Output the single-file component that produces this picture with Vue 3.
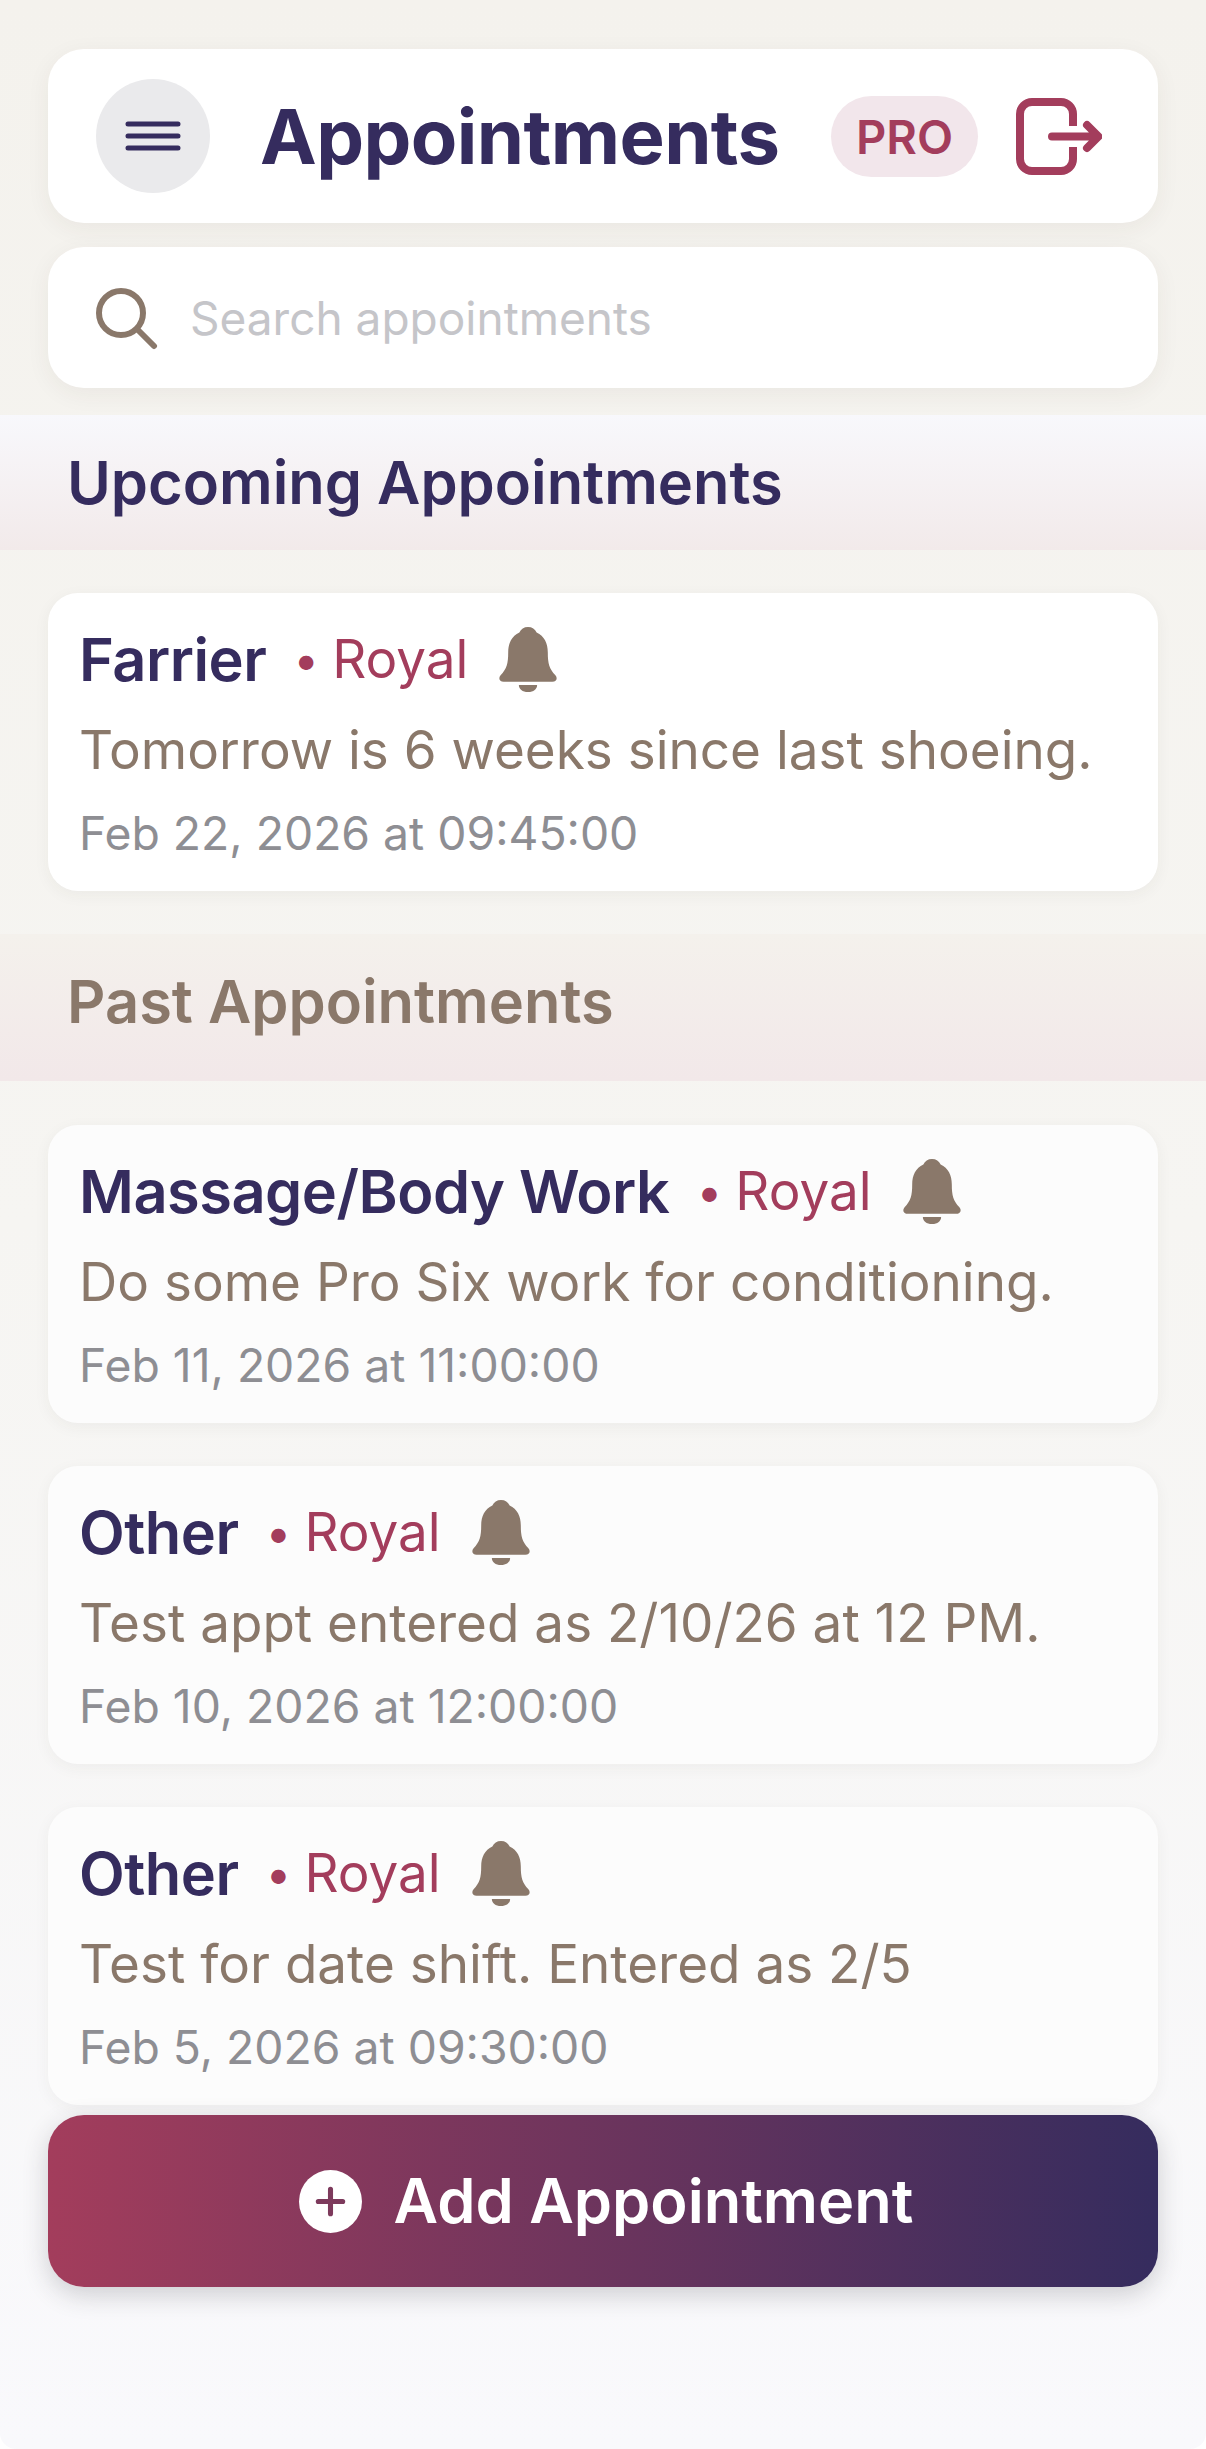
<script setup>
const past = [
  { title: 'Massage/Body Work', note: 'Do some Pro Six work for conditioning.', date: 'Feb 11, 2026 at 11:00:00' },
  { title: 'Other', note: 'Test appt entered as 2/10/26 at 12 PM.', date: 'Feb 10, 2026 at 12:00:00' },
  { title: 'Other', note: 'Test for date shift. Entered as 2/5', date: 'Feb 5, 2026 at 09:30:00' },
]
</script>

<template>
  <div class="page">
    <header class="head card-box">
      <button class="menu">
        <svg width="56" height="34" viewBox="0 0 56 34"><path d="M3 5H53M3 17H53M3 29H53" fill="none" stroke="#352c5e" stroke-width="5" stroke-linecap="round"/></svg>
      </button>
      <h1>Appointments</h1>
      <span class="pro">PRO</span>
      <svg class="logout" width="86" height="77" viewBox="0 0 86 77" fill="none" stroke="#a33d5c" stroke-width="8" stroke-linecap="round" stroke-linejoin="round">
        <path d="M57 28V16A12 12 0 0 0 45 4H16A12 12 0 0 0 4 16V61A12 12 0 0 0 16 73H45A12 12 0 0 0 57 61V49" stroke-linecap="butt"/>
        <path d="M36 38.500H82M71 27L82.500 38.500L71 50"/>
      </svg>
    </header>

    <div class="search card-box">
      <svg width="62" height="62" viewBox="0 0 62 62" fill="none" stroke="#8a786a" stroke-width="6" stroke-linecap="round"><circle cx="25" cy="25" r="22"/><path d="M41 41L58 58"/></svg>
      <span>Search appointments</span>
    </div>

    <h2 class="band upcoming">Upcoming Appointments</h2>
    <section class="list">
      <article class="item">
        <div class="top"><strong>Farrier</strong><i>•</i><em>Royal</em>
          <svg class="bell" width="60" height="65" viewBox="0 0 58 64" fill="#8a786a"><path d="M29 0C33 0 36 2 37.500 5.500C45 9 48.500 16 48.500 25C48.500 36 50 41 56 47.500C58.500 50.500 57 54 53 54H5C1 54 -0.500 50.500 2 47.500C8 41 9.500 36 9.500 25C9.500 16 13 9 20.500 5.500C22 2 25 0 29 0Z"/><path d="M20 57H38C38 61 34.500 64 29 64C23.500 64 20 61 20 57Z"/></svg>
        </div>
        <p>Tomorrow is 6 weeks since last shoeing.</p>
        <time>Feb 22, 2026 at 09:45:00</time>
      </article>
    </section>

    <h2 class="band pastband">Past Appointments</h2>
    <section class="list pastlist">
      <article v-for="p in past" :key="p.note" class="item faded">
        <div class="top"><strong>{{ p.title }}</strong><i>•</i><em>Royal</em>
          <svg class="bell" width="60" height="65" viewBox="0 0 58 64" fill="#8a786a"><path d="M29 0C33 0 36 2 37.500 5.500C45 9 48.500 16 48.500 25C48.500 36 50 41 56 47.500C58.500 50.500 57 54 53 54H5C1 54 -0.500 50.500 2 47.500C8 41 9.500 36 9.500 25C9.500 16 13 9 20.500 5.500C22 2 25 0 29 0Z"/><path d="M20 57H38C38 61 34.500 64 29 64C23.500 64 20 61 20 57Z"/></svg>
        </div>
        <p>{{ p.note }}</p>
        <time>{{ p.date }}</time>
      </article>
    </section>

    <button class="add">
      <svg width="63" height="63" viewBox="0 0 62 62"><circle cx="31" cy="31" r="31" fill="#fff"/><path d="M31 19V43M19 31H43" stroke="#7d3a5c" stroke-width="5" stroke-linecap="round"/></svg>
      <span>Add Appointment</span>
    </button>
  </div>
</template>

<style>
body { background: #fff; }
</style>

<style scoped>
.page {
  width: 1206px;
  height: 2449px;
  overflow: hidden;
  box-sizing: border-box;
  padding-top: 49px;
  border-radius: 0 0 16px 16px;
  background: linear-gradient(180deg, #f4f2ed 0%, #f6f5f2 50%, #f9f9fc 100%);
  font-family: Inter, "Liberation Sans", sans-serif;
  display: flex;
  flex-direction: column;
}
.card-box {
  margin: 0 48px;
  background: #fff;
  border-radius: 36px;
  box-shadow: 0 6px 24px rgba(60, 50, 40, 0.06);
  display: flex;
  align-items: center;
}
.head { height: 174px; padding: 0 56px 0 48px; }
.menu {
  width: 114px; height: 114px; flex: none;
  border: 0; padding: 0; border-radius: 50%;
  background: #eaeaec;
  display: flex; align-items: center; justify-content: center;
}
h1 {
  margin: 0 0 0 50px;
  flex: 1;
  font-size: 76px;
  font-weight: 700;
  letter-spacing: -0.6px;
  color: #352c5e;
}
.pro {
  width: 147px; height: 81px;
  border-radius: 41px;
  background: #f2e6eb;
  color: #a33d5c;
  font-size: 47px;
  font-weight: 600;
  display: flex; align-items: center; justify-content: center;
}
.logout { margin-left: 38px; }
.search {
  height: 141px;
  margin-top: 24px;
  padding-left: 48px;
  gap: 32px;
  color: #c5c5c9;
  font-size: 46px;
}
.search svg { margin-top: 2px; }
h2 { margin: 0; }
.band {
  padding-left: 67px;
  display: flex;
  align-items: center;
  font-size: 59.600px;
  font-weight: 600;
}
.upcoming {
  margin-top: 27px;
  height: 135px;
  padding-bottom: 2px;
  box-sizing: border-box;
  color: #352c5e;
  background: linear-gradient(180deg, #f8f8fc, #f2eaea);
}
.pastband {
  margin-top: 43px;
  height: 147px;
  padding-bottom: 14px;
  box-sizing: border-box;
  color: #8a786a;
  background: linear-gradient(180deg, #f4f1ec, #f2e8e9);
}
.list {
  margin: 43px 48px 0;
  display: flex;
  flex-direction: column;
  gap: 43px;
}
.pastlist { margin-top: 44px; }
.item {
  height: 298px;
  box-sizing: border-box;
  padding: 32px 31px 0;
  background: #fff;
  border-radius: 30px;
  box-shadow: 0 4px 16px rgba(60, 50, 40, 0.05);
}
.faded { background: #fcfcfc; }
.top { display: flex; align-items: center; height: 68px; }
strong { font-size: 59.500px; font-weight: 600; color: #352c5e; letter-spacing: -0.5px; }
i { font-style: normal; color: #a33d5c; font-size: 46px; margin-left: 27px; }
em { font-style: normal; color: #a33d5c; font-size: 53px; margin-left: 13px; }
.bell { margin-left: 30px; }
p {
  margin: 25px 0 0;
  color: #8a786a;
  font-size: 53px;
  line-height: 64px;
}
time {
  display: block;
  margin-top: 23px;
  color: #8e8e93;
  font-size: 46.300px;
  line-height: 56px;
}
.add {
  margin: 10px 48px 0;
  height: 172px;
  flex: none;
  border: 0;
  padding: 0 0 0 6px;
  border-radius: 36px;
  background: linear-gradient(90deg, #a33d5c, #352c5e);
  box-shadow: 0 8px 26px rgba(40, 40, 50, 0.2);
  display: flex;
  align-items: center;
  justify-content: center;
  gap: 32px;
  color: #fff;
  font-family: inherit;
  font-size: 61.300px;
  font-weight: 600;
}
</style>
